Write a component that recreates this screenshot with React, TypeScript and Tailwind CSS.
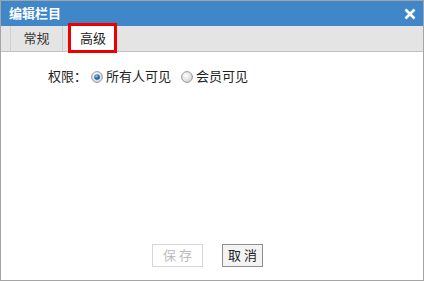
import { useState } from "react";

export default function App() {
  const [tab, setTab] = useState("advanced");
  const [perm, setPerm] = useState("all");

  return (
    <div
      className="w-[424px] h-[281px] border border-[#a5a5a5] bg-white flex flex-col"
      style={{ fontFamily: '"Liberation Sans", "Noto Sans CJK SC", sans-serif' }}
    >
      {/* title bar */}
      <div className="h-[25px] bg-[#3f87c8] flex items-center justify-between pl-[8px] pr-[7px]">
        <span className="text-white text-[13px] font-bold">编辑栏目</span>
        <svg width="12" height="12" viewBox="0 0 12 12">
          <path d="M1.5 1.5 L10.5 10.5 M10.5 1.5 L1.5 10.5" stroke="white" strokeWidth="2.6" />
        </svg>
      </div>

      {/* tabs */}
      <div className="h-[26px] bg-[#e4e4e4] border-b border-[#c2c2c2] flex items-end pl-[9px]">
        <button
          onClick={() => setTab("general")}
          className={
            "h-[25px] w-[53px] text-[13px] border-l border-r border-[#cfcfcf] " +
            (tab === "general" ? "bg-white text-[#222]" : "bg-[#e4e4e4] text-[#333]")
          }
        >
          常规
        </button>
        <div className="relative ml-[6px]">
          <button
            onClick={() => setTab("advanced")}
            className={
              "h-[26px] w-[48px] text-[13px] mb-[-1px] " +
              (tab === "advanced" ? "bg-white text-[#222]" : "bg-[#e4e4e4] text-[#333]")
            }
          >
            高级
          </button>
          <div className="absolute left-[-1px] top-[-3px] w-[49px] h-[30px] border-[3px] border-[#ee0000] pointer-events-none" />
        </div>
      </div>

      {/* body */}
      <div className="flex-1 flex flex-col">
        <div className="flex items-center text-[13px] text-[#222] pl-[47px] pt-[16px] h-[34px]">
          <span>权限：</span>
          <label className="flex items-center ml-[4px] cursor-pointer" onClick={() => setPerm("all")}>
            <Radio checked={perm === "all"} />
            <span className="ml-[3px]">所有人可见</span>
          </label>
          <label className="flex items-center ml-[10px] cursor-pointer" onClick={() => setPerm("member")}>
            <Radio checked={perm === "member"} />
            <span className="ml-[3px]">会员可见</span>
          </label>
        </div>

        <div className="flex-1" />

        <div className="flex justify-center gap-[19px] pr-[9px] mb-[13px]">
          <button
            disabled
            className="w-[51px] h-[23px] border border-[#d6d6d6] bg-white text-[#bcbcbc] text-[13px] tracking-[3px] pl-[3px]"
          >
            保存
          </button>
          <button className="w-[41px] h-[23px] border border-[#8f8f8f] bg-[#f3f3f3] text-[#222] text-[13px] tracking-[3px] pl-[3px]">
            取消
          </button>
        </div>
      </div>
    </div>
  );
}

function Radio({ checked }: { checked: boolean }) {
  return (
    <svg width="12" height="12" viewBox="0 0 12 12">
      <defs>
        <radialGradient id="rg" cx="40%" cy="35%" r="70%">
          <stop offset="0%" stopColor="#ffffff" />
          <stop offset="100%" stopColor="#d2d2d2" />
        </radialGradient>
        <radialGradient id="dot" cx="40%" cy="35%" r="70%">
          <stop offset="0%" stopColor="#7fd0ff" />
          <stop offset="60%" stopColor="#1a6fb8" />
          <stop offset="100%" stopColor="#0b3f75" />
        </radialGradient>
      </defs>
      <circle cx="6" cy="6" r="5.4" fill="url(#rg)" stroke="#8e8e8e" strokeWidth="0.9" />
      {checked && <circle cx="6" cy="6" r="2.8" fill="url(#dot)" />}
    </svg>
  );
}
